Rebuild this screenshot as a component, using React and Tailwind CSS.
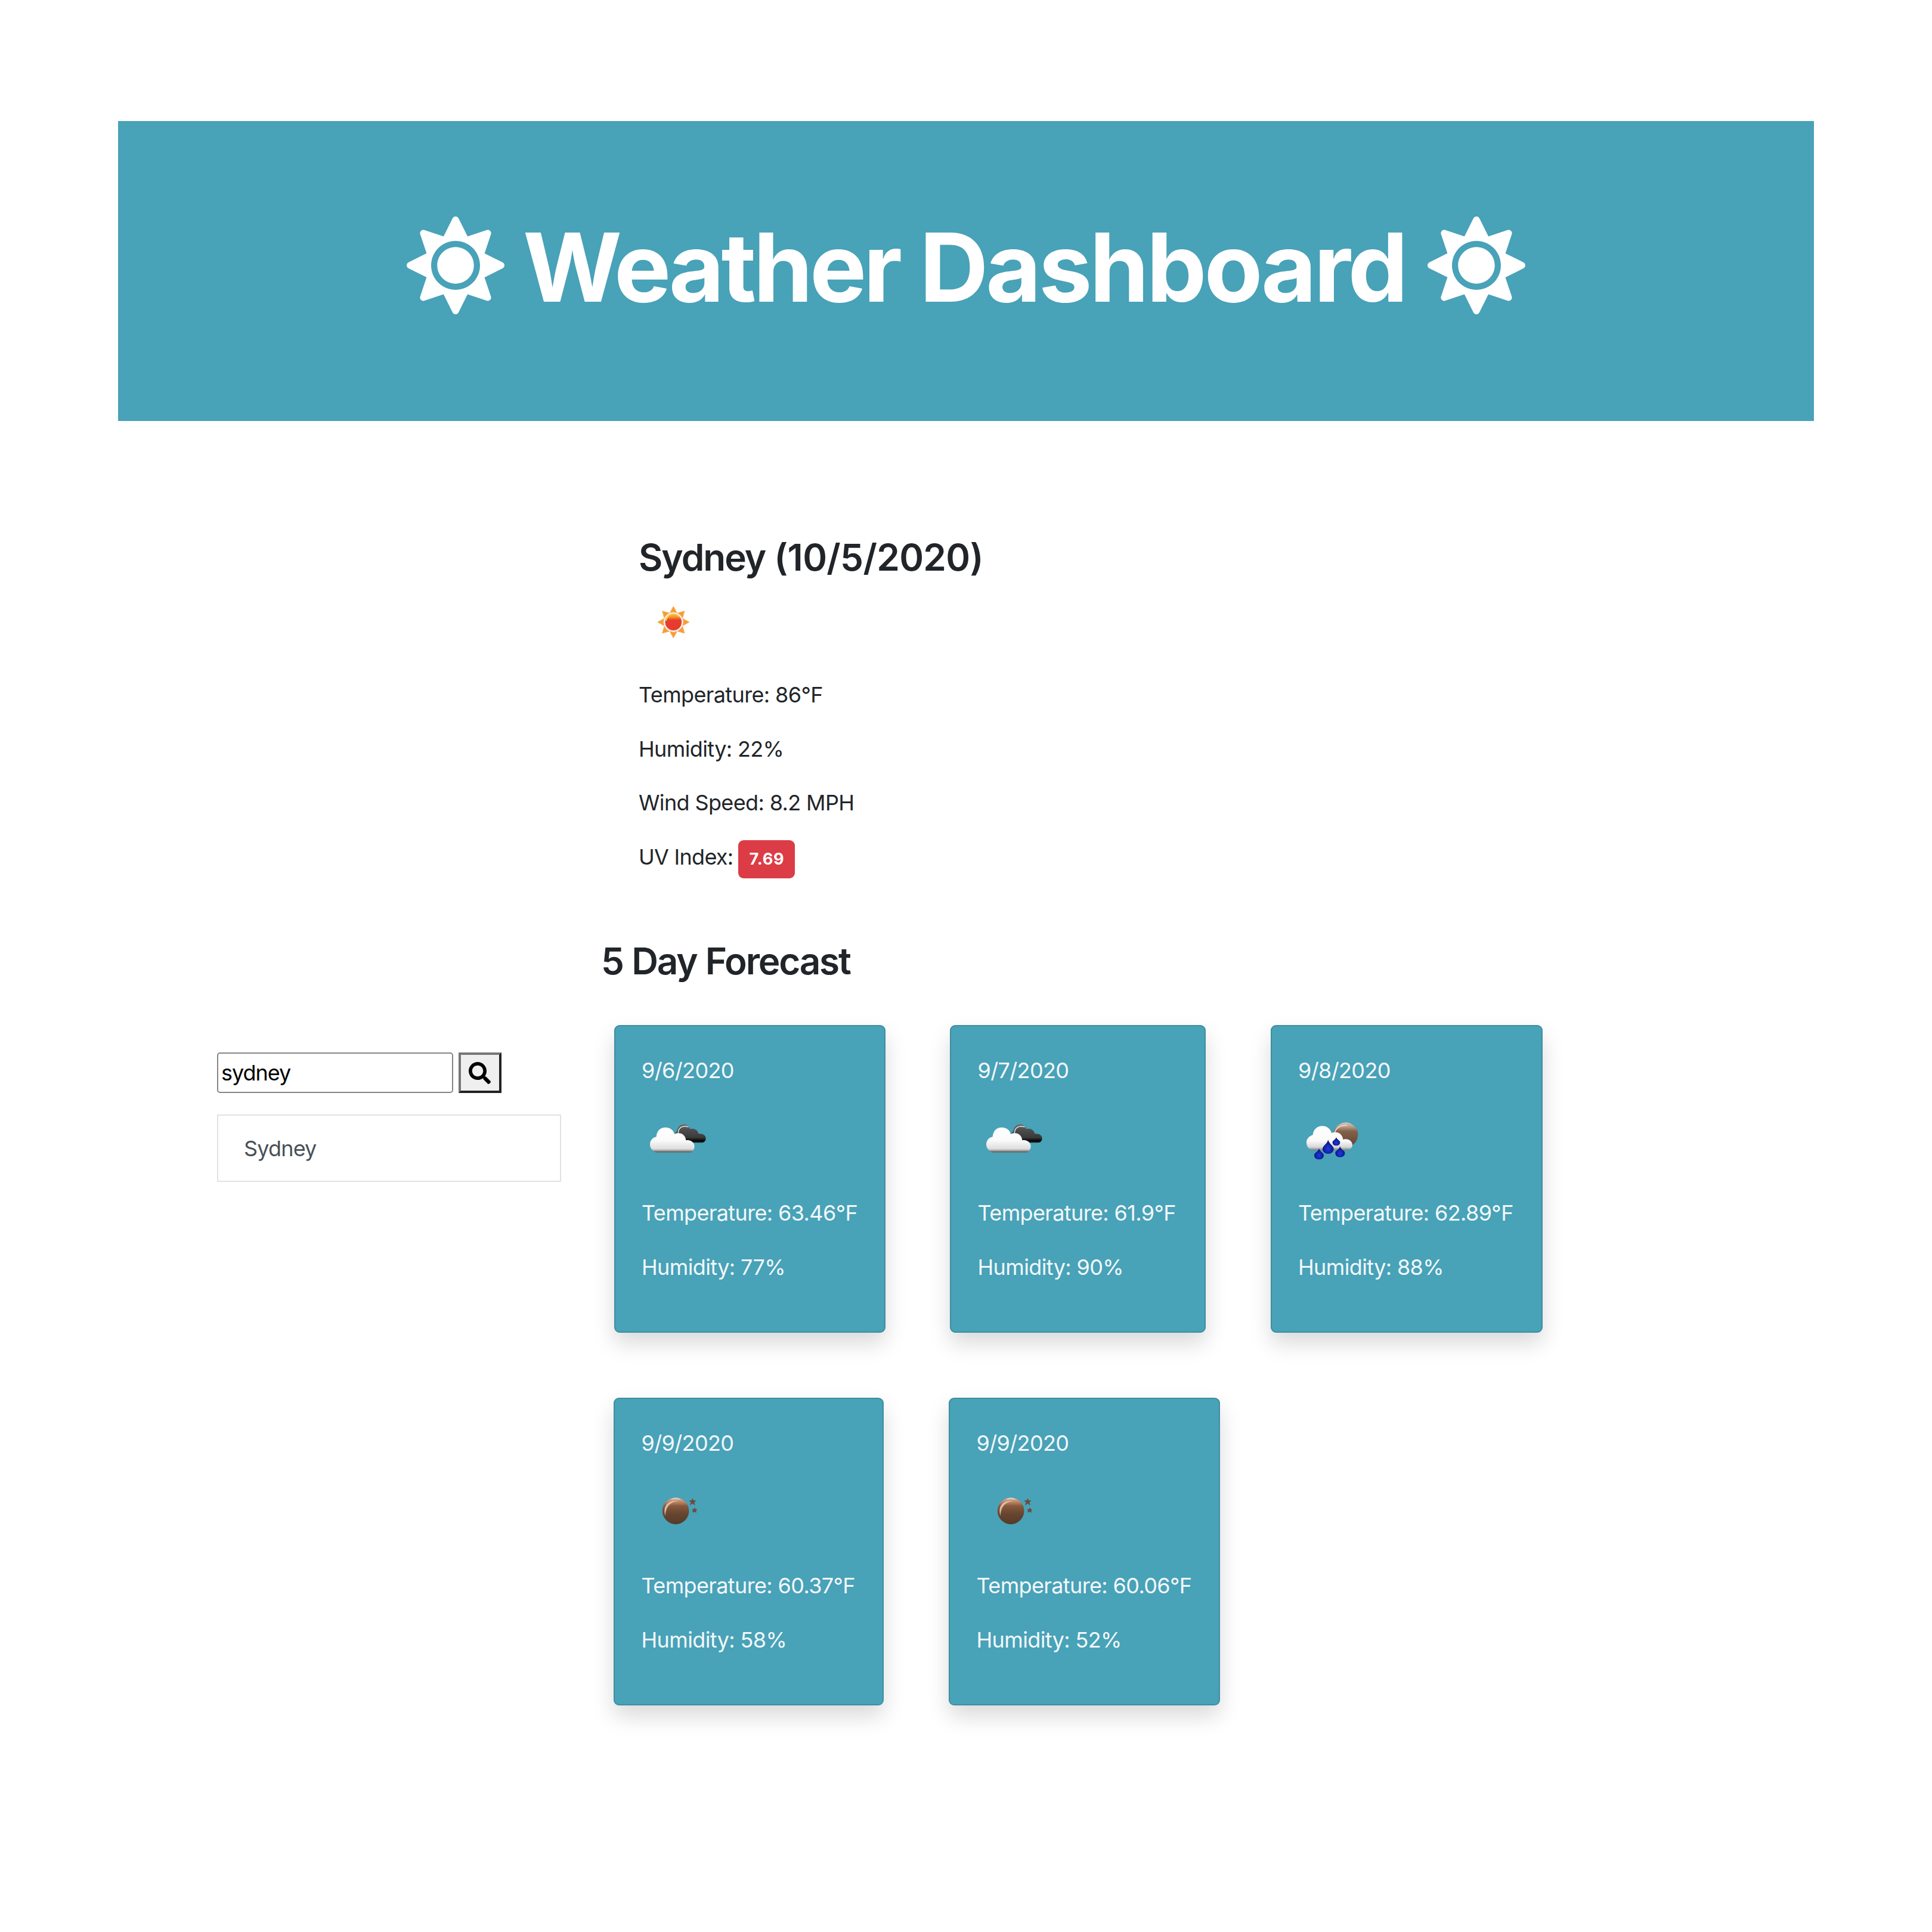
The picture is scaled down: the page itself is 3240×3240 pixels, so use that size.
import React from "react";
import { FaSun, FaSearch } from "react-icons/fa";

const CLOUD_TOP = "#ffffff";

function IconBox({ children }) {
  return (
    <svg viewBox="0 0 114 114" className="block h-[114px] w-[114px] shrink-0 overflow-visible">
      {children}
    </svg>
  );
}

function ClearDayIcon() {
  return (
    <IconBox>
      <defs>
        <linearGradient id="sunBody" x1="0" y1="0" x2="0" y2="1">
          <stop offset="0" stopColor="#fbb52c" />
          <stop offset="0.2" stopColor="#f4952c" />
          <stop offset="0.38" stopColor="#e83c2e" />
          <stop offset="1" stopColor="#e63a30" />
        </linearGradient>
      </defs>
      <g transform="translate(19 13) scale(0.3333)">
        {[0, 45, 90, 135, 180, 225, 270, 315].map((a) => (
          <path
            key={a}
            d="M118 53 L134 82 Q118 76 102 82 Z"
            transform={`rotate(${a} 118 130)`}
            fill="#f29b35"
            stroke="#f5a94f"
            strokeWidth="5"
            strokeLinejoin="round"
          />
        ))}
        <circle cx="118" cy="130" r="43" fill="url(#sunBody)" stroke="#fbd9cf" strokeWidth="3" />
        <path d="M82 121 C86 98 102 92 118 92" fill="none" stroke="#fbd02c" strokeWidth="6" strokeLinecap="round" />
        <path d="M96 98 Q118 82 142 100" fill="none" stroke="#fbc02c" strokeWidth="6" strokeLinecap="round" />
      </g>
    </IconBox>
  );
}

function BrokenCloudsIcon() {
  return (
    <IconBox>
      <defs>
        <linearGradient id="darkCloud" gradientUnits="userSpaceOnUse" x1="0" y1="78" x2="0" y2="172">
          <stop offset="0" stopColor="#6a6a6a" />
          <stop offset="0.3" stopColor="#4e4e4e" />
          <stop offset="0.72" stopColor="#3a3a3a" />
          <stop offset="0.9" stopColor="#050505" />
          <stop offset="1" stopColor="#1c2427" />
        </linearGradient>
        <linearGradient id="whiteCloud" gradientUnits="userSpaceOnUse" x1="0" y1="94" x2="0" y2="223">
          <stop offset="0" stopColor={CLOUD_TOP} />
          <stop offset="0.5" stopColor="#fbfbfb" />
          <stop offset="0.84" stopColor="#dedede" />
          <stop offset="0.91" stopColor="#a8a8a8" />
          <stop offset="0.95" stopColor="#6c6c6c" />
          <stop offset="1" stopColor="#6f7577" />
        </linearGradient>
      </defs>
      <g transform="translate(-5 1) scale(0.3333)">
        <path
          d="M180 128 Q190 117 194 112 C200 70 250 70 258 103 C278 96 299 108 301 127 C326 124 340 138 338 152 C336 166 326 172 318 172 L225 172 Z"
          fill="url(#darkCloud)"
        />
        <path d="M199 122 C200 96 220 84 249 92" fill="none" stroke="#d4d4d4" strokeWidth="5" strokeLinecap="round" />
        <path
          d="M88 222 C66 210 57 198 57 181 C57 160 72 146 89 142 C91 112 110 95 134 95 C158 95 175 108 180 128 C208 116 236 130 238 160 C262 154 281 172 281 189 C281 205 274 214 262 222 Z"
          fill="url(#whiteCloud)"
        />
      </g>
    </IconBox>
  );
}

const DROPS = [
  { x: 169, top: 157, bottom: 228, r: 28 },
  { x: 210, top: 144, bottom: 187, r: 19 },
  { x: 123, top: 200, bottom: 256, r: 24 },
  { x: 229, top: 190, bottom: 245, r: 24 },
];

function NightRainIcon() {
  return (
    <IconBox>
      <defs>
        <linearGradient id="rainMoon" x1="0" y1="0" x2="0" y2="1">
          <stop offset="0" stopColor="#d8cabd" />
          <stop offset="0.18" stopColor="#b99a84" />
          <stop offset="0.36" stopColor="#83604a" />
          <stop offset="1" stopColor="#5f4533" />
        </linearGradient>
        <linearGradient id="rainCloud" gradientUnits="userSpaceOnUse" x1="0" y1="88" x2="0" y2="212">
          <stop offset="0" stopColor={CLOUD_TOP} />
          <stop offset="0.6" stopColor="#fafafa" />
          <stop offset="0.86" stopColor="#d6d6d6" />
          <stop offset="1" stopColor="#6b6f70" />
        </linearGradient>
        <radialGradient id="rainDrop" cx="0.5" cy="0.65" r="0.5">
          <stop offset="0" stopColor="#1b3be0" />
          <stop offset="0.55" stopColor="#1426b4" />
          <stop offset="1" stopColor="#0b1478" />
        </radialGradient>
      </defs>
      <g transform="translate(-6 1) scale(0.3333)">
        <circle cx="257" cy="132" r="62" fill="url(#rainMoon)" />
        <path d="M203 118 C212 94 232 83 262 85" fill="none" stroke="#e9dfd7" strokeWidth="5" strokeLinecap="round" />
        <path
          d="M88 210 C70 203 60 190 60 171 C60 152 76 137 92 133 C94 106 114 88 140 88 C166 88 182 106 186 124 C216 110 242 130 244 156 C268 148 292 164 291 184 C290 198 280 208 268 210 Z"
          fill="url(#rainCloud)"
        />
        {DROPS.map(({ x, top, bottom, r }) => (
          <path
            key={x}
            d={`M${x} ${top} C${x + 3} ${top + r * 0.7} ${x + r} ${bottom - r * 1.4} ${x + r} ${bottom - r * 0.9} C${x + r} ${bottom + r * 0.3} ${x - r} ${bottom + r * 0.3} ${x - r} ${bottom - r * 0.9} C${x - r} ${bottom - r * 1.4} ${x - 3} ${top + r * 0.7} ${x} ${top} Z`}
            fill="url(#rainDrop)"
          />
        ))}
      </g>
    </IconBox>
  );
}

function ClearNightIcon() {
  return (
    <IconBox>
      <defs>
        <linearGradient id="moonBody" x1="0" y1="0" x2="0" y2="1">
          <stop offset="0" stopColor="#d5b59d" />
          <stop offset="0.18" stopColor="#b98060" />
          <stop offset="0.32" stopColor="#85583c" />
          <stop offset="0.6" stopColor="#674630" />
          <stop offset="1" stopColor="#553a28" />
        </linearGradient>
      </defs>
      <g transform="translate(14.5 6.5) scale(0.3333)">
        <circle cx="128" cy="133" r="67" fill="url(#moonBody)" />
        <path d="M107 75 Q128 62 150 75 Q128 70 107 75 Z" fill="#dcd0bd" stroke="#dcd0bd" strokeWidth="3" />
        <path d="M76 158 C60 112 88 76 140 84 C104 86 78 108 76 158 Z" fill="#e8c9b6" opacity="0.85" />
        <g fill="#6d4c3a" stroke="#6d4c3a" strokeWidth="3" strokeLinejoin="round">
          <path d="M213 71 L217 82 L229 82 L220 90 L224 102 L213 95 L202 102 L206 90 L197 82 L209 82 Z" />
          <path d="M223 118 L227 125 L235 126 L229 132 L231 140 L223 136 L214 140 L216 132 L211 126 L220 125 Z" />
        </g>
      </g>
    </IconBox>
  );
}

function Line({ children }) {
  return <p className="mb-9 h-[54.5px] whitespace-nowrap leading-[54px]">{children}</p>;
}

function ForecastCard({ width, date, icon, temp, humidity }) {
  return (
    <div
      className={`h-[516px] shrink-0 rounded-[9px] border-2 border-[#408ea1] bg-[#48a2b8] pl-[44.5px] pt-[46.5px] text-[#f3f8fa] shadow-[0_18px_36px_rgba(0,0,0,0.15)] ${width}`}
    >
      <Line>{date}</Line>
      {icon}
      <div className="pt-[35px]">
        <Line>Temperature: {temp}°F</Line>
        <Line>Humidity: {humidity}%</Line>
      </div>
    </div>
  );
}

export default function App() {
  return (
    <div className="flow-root h-[3240px] w-[3240px] overflow-hidden bg-white font-['Inter',sans-serif] text-[36px] tracking-[-0.63px] text-[#212529]">
      <header className="mx-[198px] mt-[203px] flex h-[503px] items-start bg-[#48a2b8] pl-[484px] pt-[149px] text-white">
        <FaSun className="mt-[11px] h-[164px] w-[164px] shrink-0" />
        <h1 className="ml-[31px] w-[1478px] whitespace-nowrap text-[160px] font-bold leading-[192px] tracking-[-4.2px]">
          <span className="tracking-[-5.1px]">Weather</span> Dashboard
        </h1>
        <FaSun className="ml-[39px] mt-[11px] h-[164px] w-[164px] shrink-0" />
      </header>

      <div className="flex items-start">
        <aside className="ml-[364px] mt-[1059px] w-[577px] shrink-0">
          <div className="flex gap-[9px]">
            <div className="flex h-[68px] w-[396px] items-center rounded-[5px] border-2 border-[#858585] bg-white pl-[5px] tracking-[-1.05px] text-black">
              <span className="leading-[64px]">sydney</span>
            </div>
            <button className="flex h-[68px] w-[72px] items-center justify-center border-4 border-b-[#222222] border-l-[#767676] border-r-[#222222] border-t-[#767676] bg-[#efefef] text-black">
              <FaSearch className="mr-[2px] h-[37px] w-[37px]" />
            </button>
          </div>
          <div className="mt-[36px] h-[113px] border-2 border-[#e2e2e2] bg-white pl-[43px] leading-[110px] tracking-[-0.82px] text-[#495057]">
            Sydney
          </div>
        </aside>

        <main className="ml-[66px] mt-[190px]">
          <section className="h-[676px] pl-[64px]">
            <h2 className="h-[91px] whitespace-nowrap pt-px text-[62px] font-semibold leading-[76px] tracking-[-0.7px]">
              <span className="tracking-[-2px]">Sydney</span> (10/5/2020)
            </h2>
            <ClearDayIcon />
            <div className="pt-[37px]">
              <Line>Temperature: 86°F</Line>
              <Line>Humidity: 22%</Line>
              <Line>Wind Speed: 8.2 MPH</Line>
              <div className="flex whitespace-nowrap leading-[54px] tracking-[-0.72px]">
                <span>UV Index:</span>
                <span className="ml-[9px] mt-[-1px] flex h-[64px] w-[95px] items-center justify-center rounded-[9px] bg-[#dc3c46] text-[27.2px] font-bold tracking-[0.72px] text-white">
                  7.69
                </span>
              </div>
            </div>
          </section>

          <h2 className="h-[147px] whitespace-nowrap pl-px pt-[2px] text-[62px] font-semibold leading-[76px] tracking-[-2.2px] [word-spacing:1px]">
            5 Day Forecast
          </h2>

          <div className="flex gap-[108.5px] pl-[22.5px]">
            <ForecastCard width="w-[455px]" date="9/6/2020" icon={<BrokenCloudsIcon />} temp="63.46" humidity="77" />
            <ForecastCard width="w-[429px]" date="9/7/2020" icon={<BrokenCloudsIcon />} temp="61.9" humidity="90" />
            <ForecastCard width="w-[456px]" date="9/8/2020" icon={<NightRainIcon />} temp="62.89" humidity="88" />
          </div>
          <div className="mt-[109px] flex gap-[109px] pl-[22px]">
            <ForecastCard width="w-[453px]" date="9/9/2020" icon={<ClearNightIcon />} temp="60.37" humidity="58" />
            <ForecastCard width="w-[455px]" date="9/9/2020" icon={<ClearNightIcon />} temp="60.06" humidity="52" />
          </div>
        </main>
      </div>
    </div>
  );
}
